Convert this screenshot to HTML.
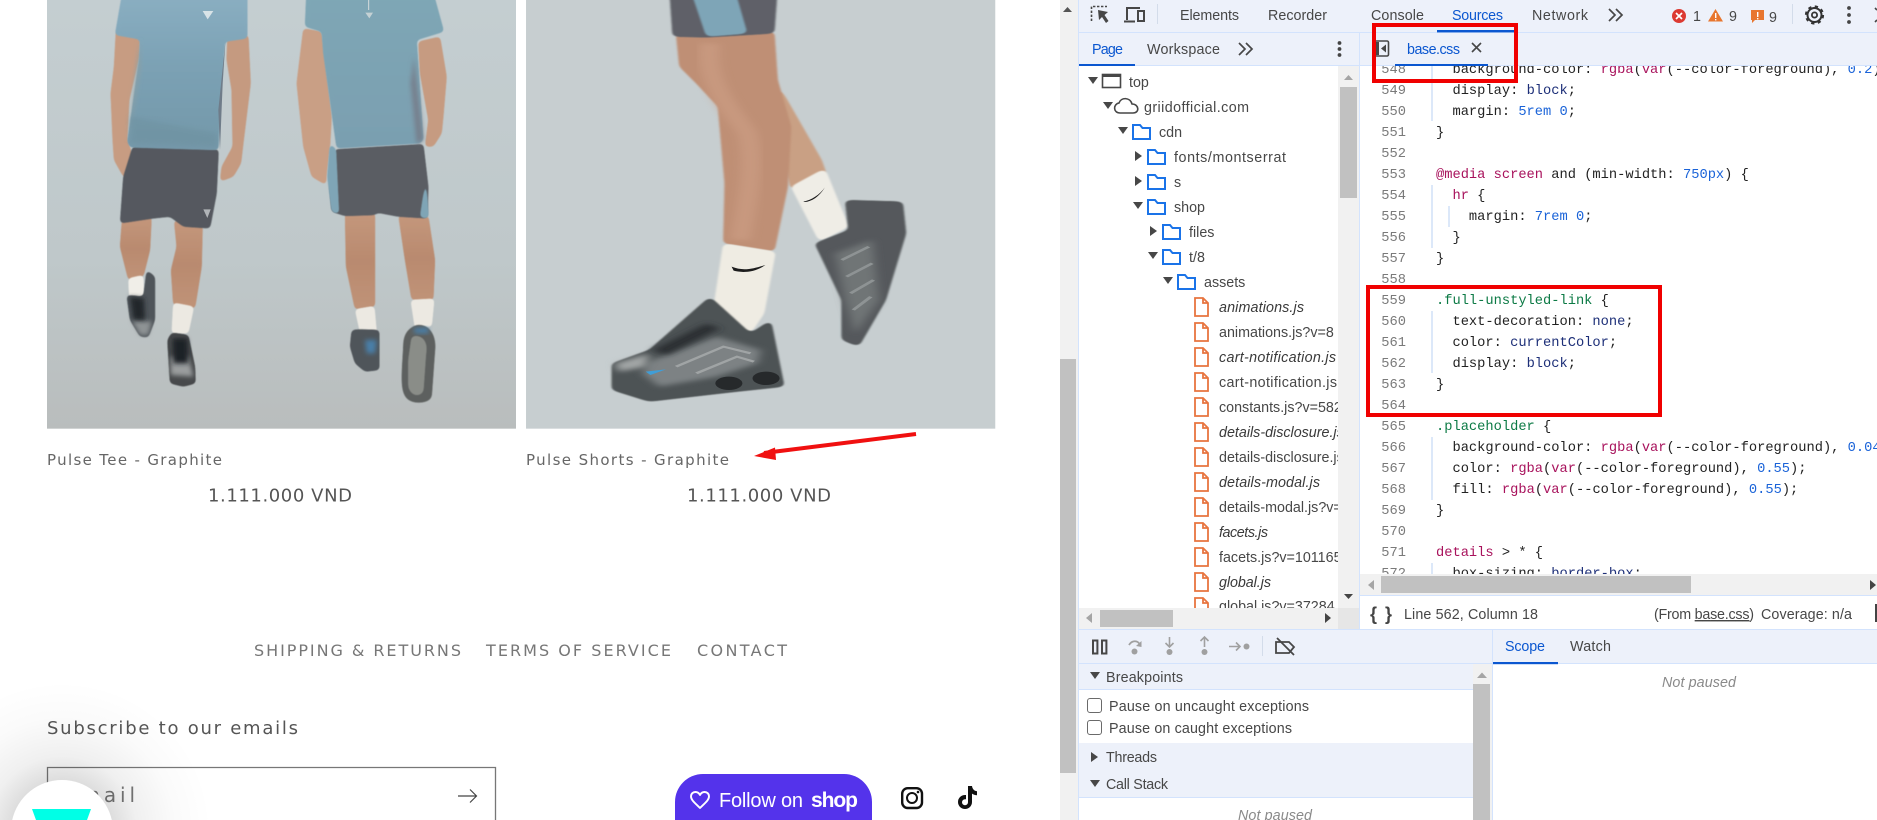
<!DOCTYPE html>
<html><head><meta charset="utf-8"><style>
html,body{margin:0;padding:0;background:#fff;width:1877px;height:820px;overflow:hidden}
svg{display:block}
text{white-space:pre}
.s{font-family:"Liberation Sans",sans-serif}
.d{font-family:"Liberation Sans",sans-serif;font-size:14.3px;fill:#474747}
.i{font-style:italic;fill:#3a3a3a}
.c{font-family:"Liberation Mono",monospace;font-size:13.72px;fill:#222}
.n{font-family:"Liberation Mono",monospace;font-size:13.72px;fill:#7a7a7a;text-anchor:end}
.r{fill:#a8125c}.v{fill:#1a63d8}.k{fill:#1d2f78}.g{fill:#0c7a45}
.m{font-family:"DejaVu Sans",sans-serif;fill:#666}
.ph path{filter:url(#sm)}
</style></head><body>
<svg xmlns="http://www.w3.org/2000/svg" width="1877" height="820" viewBox="0 0 1877 820">
<defs>
<linearGradient id="bg1" x1="0" y1="0" x2="0" y2="1"><stop offset="0" stop-color="#c4ced1"/><stop offset=".6" stop-color="#bfc8ca"/><stop offset="1" stop-color="#b9bdbd"/></linearGradient>
<linearGradient id="tee" x1="0" y1="0" x2="0" y2="1"><stop offset="0" stop-color="#8cb0c3"/><stop offset=".5" stop-color="#7ba1b4"/><stop offset="1" stop-color="#7498a9"/></linearGradient>
<linearGradient id="tee2" x1="0" y1="0" x2="0" y2="1"><stop offset="0" stop-color="#7fa7b6"/><stop offset="1" stop-color="#7a9fb0"/></linearGradient>
<linearGradient id="leg" x1="0" y1="0" x2="0" y2="1"><stop offset="0" stop-color="#c4977c"/><stop offset=".5" stop-color="#b98a6f"/><stop offset="1" stop-color="#c09378"/></linearGradient>
<radialGradient id="hz" gradientUnits="userSpaceOnUse" cx="62" cy="831" r="150"><stop offset=".3" stop-color="#000" stop-opacity=".15"/><stop offset=".5" stop-color="#000" stop-opacity=".06"/><stop offset=".75" stop-color="#000" stop-opacity=".018"/><stop offset="1" stop-color="#000" stop-opacity="0"/></radialGradient>
<filter id="sm" x="-20%" y="-20%" width="140%" height="140%"><feGaussianBlur in="SourceGraphic" stdDeviation="6"/><feColorMatrix type="matrix" values="1 0 0 0 0 0 1 0 0 0 0 0 1 0 0 0 0 0 14 -6"/><feGaussianBlur stdDeviation="1.5"/></filter>
<filter id="sf" x="-30%" y="-30%" width="160%" height="160%"><feGaussianBlur stdDeviation="7"/></filter>
<clipPath id="img1"><rect x="21" y="0" width="1407" height="1286"/></clipPath>
<clipPath id="img2"><rect x="778" y="0" width="694" height="1286"/></clipPath>
<clipPath id="tree"><rect x="1079" y="66" width="259" height="542"/></clipPath>
<clipPath id="code"><rect x="1360" y="66" width="517" height="508"/></clipPath>
<g id="fo"><path d="M1 -3V-7H8L10.5 -4H18V7H1Z" fill="none" stroke="#1a73e8" stroke-width="2"/></g>
<g id="fi"><path d="M1 -9H9L14 -4V9H1ZM9 -9V-4H14" fill="none" stroke="#e8743f" stroke-width="1.8"/></g>
<polygon id="dn" points="0,-4 10,-4 5,3" fill="#474747"/>
<polygon id="rt" points="0,-5 7,0 0,5" fill="#474747"/>
</defs>

<!-- left photo -->
<g transform="translate(40,0) scale(.33333)">
<rect x="21" y="0" width="1407" height="1286" fill="url(#bg1)"/>
<g clip-path="url(#img1)"><g class="ph">
<path d="M228 90L300 110L298 170L268 300L262 420L280 470L285 540L250 530L222 480L218 420L212 280L222 200Z" fill="#c79c82"/>
<path d="M562 110L625 105L632 250L610 430L603 490L580 530L540 545L545 500L578 440L575 270L560 180Z" fill="#c59a80"/>
<path d="M246 660L335 650L330 750L310 830L265 840L240 740Z" fill="url(#leg)"/>
<path d="M402 660L488 675L485 800L465 925L400 915L393 810L410 740Z" fill="url(#leg)"/>
<path d="M278 440L536 448L530 580L510 685L430 680L390 650L340 655L240 670L250 530Z" fill="#55585f"/>
<path d="M250 -40L225 105L300 118L297 180L262 425L270 442L535 450L540 330L555 125L622 115L622 -40Z" fill="url(#tee)"/>
<path d="M265 835L310 825L312 890L268 895Z" fill="#f0eee8"/>
<path d="M400 908L462 920L445 1000L395 1000Z" fill="#ece9e2"/>
<path d="M320 810L345 830L345 960L325 1012L300 1010L270 960L260 885L310 890Z" fill="#50555a"/>
<path d="M395 998L445 1005L465 1100L467 1150L430 1160L390 1150L382 1020Z" fill="#46494c"/>
<path d="M790 85L845 95L855 180L875 350L870 440L860 520L858 555L815 530L790 440L770 250Z" fill="#c99f85"/>
<path d="M1135 125L1200 110L1220 230L1210 350L1205 400L1180 440L1155 440L1165 360L1140 220Z" fill="#c69b81"/>
<path d="M915 640L1005 638L1005 780L1005 920L945 928L918 800Z" fill="url(#leg)"/>
<path d="M1075 645L1165 648L1185 780L1180 900L1115 900L1095 780Z" fill="url(#leg)"/>
<path d="M885 448L1150 432L1165 560L1162 655L1075 650L1012 638L1005 645L915 648L875 635L868 560Z" fill="#5a5d64"/>
<path d="M870 430L888 448L897 642L875 635L862 530Z" fill="#7fa5b6"/>
<path d="M1158 530L1166 655L1140 652Z" fill="#7fa5b6"/>
<path d="M800 -40L795 80L845 95L850 160L890 445L1140 430L1150 420L1130 120L1212 95L1175 -40Z" fill="url(#tee2)"/>
<path d="M945 928L1003 918L1012 1020L965 1020Z" fill="#ece9e2"/>
<path d="M1112 900L1183 896L1175 980L1125 985Z" fill="#ece9e2"/>
<path d="M935 990L960 988L1018 990L1018 1110L975 1115L945 1090L930 1040Z" fill="#50555a"/>
<path d="M1130 975C1170 970 1190 1010 1185 1050L1175 1190C1170 1210 1120 1215 1100 1195C1080 1170 1085 1130 1090 1040C1090 1000 1105 985 1130 975Z" fill="#5d605f"/>
<path d="M1115 1010C1150 1000 1165 1030 1158 1060L1150 1175C1135 1195 1110 1185 1105 1160L1105 1080Z" fill="#8a8d88"/>
</g>
<path d="M300 118L262 425L285 300L300 200Z" fill="#8c9fa3" filter="url(#sf)"/>
<path d="M556 125L535 330L540 450L548 250Z" fill="#6f7c89"/>
<path d="M1122 170L1150 420L1130 432L1112 250Z" fill="#767f8c" filter="url(#sf)"/>
<path d="M275 960L335 965L325 1005L300 1005Z" fill="#8e9394" filter="url(#sf)"/>
<path d="M270 890L312 895L315 960L280 960Z" fill="#22262c" filter="url(#sf)"/>
<path d="M392 1070L445 1070L460 1130L392 1125Z" fill="#9a9d9e" filter="url(#sf)"/>
<path d="M398 1015L442 1015L445 1090L400 1090Z" fill="#1f2226" filter="url(#sf)"/>
<path d="M1120 985L1165 982L1165 1000L1125 1000Z" fill="#4a7fa8" filter="url(#sf)"/>
<path d="M975 1020L1010 1020L1005 1060L980 1060Z" fill="#4a7fa8" filter="url(#sf)"/>
<path d="M270 350L530 400L530 440L275 430Z" fill="#6d909f" filter="url(#sf)" opacity=".5"/>
<path d="M388 500V650" stroke="#46484e" stroke-width="5" filter="url(#sf)"/>
<path d="M1010 480V640" stroke="#4b4d54" stroke-width="5" filter="url(#sf)"/>
</g>
<path d="M986 0V30" stroke="#d6dcdc" stroke-width="3"/>
<path d="M976 38H999L988 55Z" fill="#d6dcdc" opacity=".8"/>
<path d="M488 33H520L503 58Z" fill="#e6ecee" opacity=".85"/>
<path d="M490 628H512L502 654Z" fill="#c8ccce" opacity=".8"/>
</g>

<!-- right photo -->
<g transform="scale(.67613 .33333)">
<rect x="778" y="0" width="694" height="1286" fill="#c7ced0"/>
<g clip-path="url(#img2)"><g class="ph">
<path d="M1150 250L1215 480L1222 520L1170 570L1150 400Z" fill="#c9a084"/>
<path d="M1170 560L1220 505L1255 680L1212 725Z" fill="#efede6"/>
<path d="M1250 600L1335 605L1340 700L1310 900L1270 1040L1245 1020L1245 900L1205 730L1255 690Z" fill="#55595b"/>
<path d="M1000 100L1145 95L1150 240L1170 380L1165 560L1145 755L1070 730L1072 550L1062 320L1030 250L1005 200Z" fill="#bf8f74"/>
<path d="M1070 730L1147 755L1130 940L1110 1000L1055 930Z" fill="#efece3"/>
<path d="M1050 890L1110 1000L1140 960L1160 1160L1090 1175L960 1205L905 1170L905 1090L960 1050Z" fill="#4e5254"/>
<path d="M990 -40H1150L1145 100L1045 112L995 110Z" fill="#5f6168"/>
<path d="M1020 -40H1085L1105 100L1045 110Z" fill="#7ea5b7"/>
</g>
<path d="M1235 760L1290 720L1300 900L1265 1000L1250 900Z" fill="#6f7476" filter="url(#sf)"/>
<path d="M960 1085L1060 1010L1125 1050L1120 1090L1060 1130L975 1160L950 1120Z" fill="#7d8284" filter="url(#sf)"/>
<path d="M910 1090L960 1060L955 1100L915 1115Z" fill="#a2a6a6" filter="url(#sf)"/>
<path d="M965 1050L1045 970L1065 985L985 1065Z" fill="#2b2f33" filter="url(#sf)"/>
<path d="M1000 1100L1070 1040L1110 1060M1030 1120L1090 1070L1115 1085" fill="none" stroke="#a0a4a5" stroke-width="6"/>
<path d="M1245 780L1285 740M1252 830L1290 790M1258 880L1292 840M1262 930L1288 890" fill="none" stroke="#8e9394" stroke-width="6"/>
<path d="M1050 130C1040 250 1090 350 1105 400C1120 500 1100 650 1095 720" fill="none" stroke="#cd9f85" stroke-width="30" filter="url(#sf)" opacity=".6"/>
</g>
<circle cx="1078" cy="1150" r="20" fill="#26292b"/><circle cx="1133" cy="1135" r="20" fill="#26292b"/>
<path d="M1082 800C1100 815 1115 805 1132 795C1115 820 1095 818 1085 812Z" fill="#1c1c1c"/>
<path d="M1188 605C1200 600 1212 585 1220 562C1212 590 1200 605 1190 606Z" fill="#1c1c1c"/>
<path d="M955 1115L985 1108L962 1125Z" fill="#3f9ed8"/>
</g>

<!-- red arrow -->
<path d="M916 434L764 453" stroke="#f01010" stroke-width="4" fill="none"/>
<polygon points="754,456 775,447.5 776,460" fill="#f01010"/>

<!-- product text -->
<text class="m" x="47" y="465" font-size="15" textLength="175">Pulse Tee - Graphite</text>
<text class="m" x="526" y="465" font-size="15" textLength="203">Pulse Shorts - Graphite</text>
<text class="m" x="208" y="501.5" font-size="18" textLength="144" style="fill:#555">1.111.000 VND</text>
<text class="m" x="687" y="501.5" font-size="18" textLength="144" style="fill:#555">1.111.000 VND</text>
<text class="m" x="254" y="656" font-size="16" textLength="207" style="fill:#777">SHIPPING &amp; RETURNS</text>
<text class="m" x="486" y="656" font-size="16" textLength="185" style="fill:#777">TERMS OF SERVICE</text>
<text class="m" x="697" y="656" font-size="16" textLength="90" style="fill:#777">CONTACT</text>
<text class="m" x="47" y="734" font-size="18" textLength="251" style="fill:#555">Subscribe to our emails</text>

<path d="M47.5 820V767.5H495.5V820" fill="none" stroke="#777" stroke-width="1.3"/>
<text class="m" x="64" y="802" font-size="20" textLength="71" style="fill:#777">Email</text>
<path d="M458 796H476M470 789.5L476.5 796L470 802.5" fill="none" stroke="#444" stroke-width="1.2"/>

<!-- Follow on shop -->
<path d="M703 774H844A28 28 0 0 1 872 802V820H675V802A28 28 0 0 1 703 774Z" fill="#5433eb"/>
<path d="M700 808C695 803 691 800 691 796.5C691 793.5 693.2 792 695.4 792C697.4 792 699 793 700 795C701 793 702.6 792 704.6 792C706.8 792 709 793.5 709 796.5C709 800 705 803 700 808Z" fill="none" stroke="#fff" stroke-width="1.9" stroke-linejoin="round"/>
<text class="s" x="719" y="807" font-size="20" textLength="84" fill="#fff">Follow on</text>
<text class="s" x="811" y="807" font-size="21" font-weight="bold" textLength="47" fill="#fff">shop</text>

<rect x="902.2" y="788.2" width="19.8" height="19.8" rx="5.5" fill="none" stroke="#111" stroke-width="2.4"/>
<circle cx="912" cy="798" r="5" fill="none" stroke="#111" stroke-width="2"/>
<circle cx="918" cy="792" r="1.3" fill="#111"/>
<path d="M968 786h4c.4 3 2.2 5 5 5.2v4c-2 0-3.7-.6-5-1.6V802a7 7 0 1 1-7-7h1v4.2h-1a3 3 0 1 0 3 3Z" fill="#111"/>

<!-- circle widget -->
<rect x="0" y="681" width="212" height="139" fill="url(#hz)"/>
<path d="M12.2 820A51 51 0 0 1 111.8 820Z" fill="#fff"/>
<polygon points="32,809 91,809 87,820 36,820" fill="#00ffe6"/>

<!-- Devtools base -->
<rect x="1060" y="0" width="817" height="820" fill="#fff"/>
<rect x="1060" y="0" width="19" height="820" fill="#f1f1f1"/>
<rect x="1060" y="359" width="16" height="414" fill="#c1c1c1"/>
<polygon points="1063,12 1072,12 1067.5,7" fill="#555"/>
<rect x="1078" y="0" width="1" height="820" fill="#d3e3fd"/>

<!-- code pane -->
<g clip-path="url(#code)"><g transform="translate(0,-1)">
<path d="M1432 66V122M1432 186V249M1449 207V228M1432 312V374M1432 438V501M1432 564V575" stroke="#c5d8f5" stroke-width="1.2"/>
<g class="n">
<text class="n" x="1406" y="74">548</text><text class="n" x="1406" y="95">549</text><text class="n" x="1406" y="116">550</text><text class="n" x="1406" y="137">551</text><text class="n" x="1406" y="158">552</text><text class="n" x="1406" y="179">553</text><text class="n" x="1406" y="200">554</text><text class="n" x="1406" y="221">555</text><text class="n" x="1406" y="242">556</text><text class="n" x="1406" y="263">557</text><text class="n" x="1406" y="284">558</text><text class="n" x="1406" y="305">559</text><text class="n" x="1406" y="326">560</text><text class="n" x="1406" y="347">561</text><text class="n" x="1406" y="368">562</text><text class="n" x="1406" y="389">563</text><text class="n" x="1406" y="410">564</text><text class="n" x="1406" y="431">565</text><text class="n" x="1406" y="452">566</text><text class="n" x="1406" y="473">567</text><text class="n" x="1406" y="494">568</text><text class="n" x="1406" y="515">569</text><text class="n" x="1406" y="536">570</text><text class="n" x="1406" y="557">571</text><text class="n" x="1406" y="578">572</text>
</g>
<text class="c" x="1436" y="74">  background-color: <tspan class="r">rgba</tspan>(<tspan class="r">var</tspan>(--color-foreground), <tspan class="v">0.2</tspan>);</text>
<text class="c" x="1436" y="95">  display: <tspan class="k">block</tspan>;</text>
<text class="c" x="1436" y="116">  margin: <tspan class="v">5rem 0</tspan>;</text>
<text class="c" x="1436" y="137">}</text>
<text class="c" x="1436" y="179"><tspan class="r">@media screen</tspan> and (min-width: <tspan class="v">750px</tspan>) {</text>
<text class="c" x="1436" y="200">  <tspan class="r">hr</tspan> {</text>
<text class="c" x="1436" y="221">    margin: <tspan class="v">7rem 0</tspan>;</text>
<text class="c" x="1436" y="242">  }</text>
<text class="c" x="1436" y="263">}</text>
<text class="c" x="1436" y="305"><tspan class="g">.full-unstyled-link</tspan> {</text>
<text class="c" x="1436" y="326">  text-decoration: <tspan class="k">none</tspan>;</text>
<text class="c" x="1436" y="347">  color: <tspan class="k">currentColor</tspan>;</text>
<text class="c" x="1436" y="368">  display: <tspan class="k">block</tspan>;</text>
<text class="c" x="1436" y="389">}</text>
<text class="c" x="1436" y="431"><tspan class="g">.placeholder</tspan> {</text>
<text class="c" x="1436" y="452">  background-color: <tspan class="r">rgba</tspan>(<tspan class="r">var</tspan>(--color-foreground), <tspan class="v">0.04</tspan>);</text>
<text class="c" x="1436" y="473">  color: <tspan class="r">rgba</tspan>(<tspan class="r">var</tspan>(--color-foreground), <tspan class="v">0.55</tspan>);</text>
<text class="c" x="1436" y="494">  fill: <tspan class="r">rgba</tspan>(<tspan class="r">var</tspan>(--color-foreground), <tspan class="v">0.55</tspan>);</text>
<text class="c" x="1436" y="515">}</text>
<text class="c" x="1436" y="557"><tspan class="r">details</tspan> &gt; * {</text>
<text class="c" x="1436" y="578">  box-sizing: <tspan class="k">border-box</tspan>;</text>
</g></g>

<!-- code h-scroll -->
<rect x="1360" y="574" width="517" height="21" fill="#f1f1f1"/>
<rect x="1381" y="576" width="310" height="17" fill="#c1c1c1"/>
<polygon points="1374,580 1374,590 1368,585" fill="#a5a5a5"/>
<polygon points="1870,580 1870,590 1876,585" fill="#444"/>
<rect x="1360" y="595" width="517" height="1" fill="#d3e3fd"/>

<!-- status bar -->
<text class="s" x="1370" y="620" font-size="18" font-weight="bold" fill="#444" textLength="22">{ }</text>
<text class="d" x="1404" y="619" textLength="134">Line 562, Column 18</text>
<text class="d" x="1654" y="619" textLength="100">(From <tspan text-decoration="underline">base.css</tspan>)</text>
<text class="d" x="1761" y="619" textLength="91">Coverage: n/a</text>
<rect x="1875" y="604" width="2" height="18" fill="#444"/>

<!-- Tree pane -->
<g clip-path="url(#tree)">
<use href="#dn" x="1088" y="81"/><rect x="1102.5" y="74.5" width="18" height="13" fill="none" stroke="#474747" stroke-width="1.6"/><rect x="1102" y="74" width="19" height="3" fill="#474747"/>
<text class="d" x="1129" y="87">top</text>
<use href="#dn" x="1103" y="106"/><path d="M1120 113H1133C1140 113 1139 104 1132 104C1130 97 1121 97 1119 103C1113 104 1113 113 1120 113Z" fill="none" stroke="#474747" stroke-width="1.6"/>
<text class="d" x="1144" y="112" textLength="105">griidofficial.com</text>
<use href="#dn" x="1118" y="131"/><use href="#fo" x="1132" y="132"/><text class="d" x="1159" y="137">cdn</text>
<use href="#rt" x="1135" y="156"/><use href="#fo" x="1147" y="157"/><text class="d" x="1174" y="162" textLength="112">fonts/montserrat</text>
<use href="#rt" x="1135" y="181"/><use href="#fo" x="1147" y="182"/><text class="d" x="1174" y="187">s</text>
<use href="#dn" x="1133" y="206"/><use href="#fo" x="1147" y="207"/><text class="d" x="1174" y="212">shop</text>
<use href="#rt" x="1150" y="231"/><use href="#fo" x="1162" y="232"/><text class="d" x="1189" y="237">files</text>
<use href="#dn" x="1148" y="256"/><use href="#fo" x="1162" y="257"/><text class="d" x="1189" y="262">t/8</text>
<use href="#dn" x="1163" y="281"/><use href="#fo" x="1177" y="282"/><text class="d" x="1204" y="287">assets</text>
<use href="#fi" x="1194" y="307"/><text class="d i" x="1219" y="312" textLength="85">animations.js</text>
<use href="#fi" x="1194" y="332"/><text class="d" x="1219" y="337">animations.js?v=8</text>
<use href="#fi" x="1194" y="357"/><text class="d i" x="1219" y="362" textLength="117">cart-notification.js</text>
<use href="#fi" x="1194" y="382"/><text class="d" x="1219" y="387" textLength="118">cart-notification.js</text>
<use href="#fi" x="1194" y="407"/><text class="d" x="1219" y="412">constants.js?v=582</text>
<use href="#fi" x="1194" y="432"/><text class="d i" x="1219" y="437">details-disclosure.js</text>
<use href="#fi" x="1194" y="457"/><text class="d" x="1219" y="462">details-disclosure.js</text>
<use href="#fi" x="1194" y="482"/><text class="d i" x="1219" y="487" textLength="101">details-modal.js</text>
<use href="#fi" x="1194" y="507"/><text class="d" x="1219" y="512">details-modal.js?v=</text>
<use href="#fi" x="1194" y="532"/><text class="d i" x="1219" y="537" textLength="49">facets.js</text>
<use href="#fi" x="1194" y="557"/><text class="d" x="1219" y="562">facets.js?v=101165</text>
<use href="#fi" x="1194" y="582"/><text class="d i" x="1219" y="587" textLength="52">global.js</text>
<use href="#fi" x="1194" y="607"/><text class="d" x="1219" y="611">global.js?v=37284</text>
</g>
<rect x="1338" y="66" width="21" height="542" fill="#f1f1f1"/>
<rect x="1340" y="87" width="17" height="111" fill="#c1c1c1"/>
<polygon points="1344,80 1353,80 1348.5,75" fill="#a5a5a5"/>
<polygon points="1344,594 1353,594 1348.5,599" fill="#444"/>
<rect x="1079" y="608" width="259" height="21" fill="#f1f1f1"/>
<rect x="1100" y="610" width="73" height="17" fill="#c1c1c1"/>
<polygon points="1092,613 1092,623 1086,618" fill="#a5a5a5"/>
<polygon points="1325,613 1325,623 1331,618" fill="#444"/>
<rect x="1338" y="608" width="21" height="21" fill="#e6e6e6"/>
<rect x="1359" y="33" width="1" height="596" fill="#d3e3fd"/>

<!-- top bars -->
<rect x="1079" y="0" width="798" height="32" fill="#edf1fa"/>
<rect x="1079" y="32" width="798" height="1" fill="#d3e3fd"/>
<rect x="1079" y="33" width="798" height="32" fill="#edf1fa"/>
<rect x="1079" y="65" width="798" height="1" fill="#d3e3fd"/>
<rect x="1359" y="33" width="1" height="33" fill="#d3e3fd"/>

<path d="M1091.5 21V6.5H1107" fill="none" stroke="#474747" stroke-width="1.6" stroke-dasharray="2.4 1.6"/>
<path d="M1098 10L1108 12L1104.5 15L1108.5 21L1106 23L1102 17L1099 20Z" fill="#474747"/>
<path d="M1127 20V8H1140M1124 21.5H1135" fill="none" stroke="#474747" stroke-width="2"/>
<rect x="1138" y="11" width="6" height="10" fill="none" stroke="#474747" stroke-width="2"/>
<rect x="1157" y="4" width="1" height="20" fill="#d3dcea"/>
<text class="d" x="1180" y="20" textLength="59">Elements</text>
<text class="d" x="1268" y="20" textLength="59">Recorder</text>
<text class="d" x="1371" y="20" textLength="53">Console</text>
<text class="d" x="1452" y="20" textLength="51" style="fill:#0b57d0">Sources</text>
<rect x="1437" y="30" width="78" height="2.4" fill="#0b57d0"/>
<text class="d" x="1532" y="20" textLength="56">Network</text>
<path d="M1609 9L1615 15L1609 21M1616 9L1622 15L1616 21" fill="none" stroke="#474747" stroke-width="1.7"/>
<circle cx="1679" cy="16" r="7" fill="#dc3a32"/>
<path d="M1676 13L1682 19M1682 13L1676 19" stroke="#fff" stroke-width="1.7"/>
<text class="d" x="1693" y="21">1</text>
<polygon points="1708,21.5 1723,21.5 1715.5,9" fill="#e8762f"/>
<rect x="1715" y="13" width="1.4" height="5" fill="#fff"/><rect x="1715" y="19" width="1.4" height="1.4" fill="#fff"/>
<text class="d" x="1729" y="21">9</text>
<path d="M1751 10H1764V20H1755L1752 23V20H1751Z" fill="#e8762f"/>
<rect x="1757" y="12" width="1.4" height="5" fill="#fff"/><rect x="1757" y="18" width="1.4" height="1.4" fill="#fff"/>
<text class="d" x="1769" y="22">9</text>
<rect x="1792" y="4" width="1" height="20" fill="#d3dcea"/>
<circle cx="1814.5" cy="15" r="7" fill="none" stroke="#333" stroke-width="2"/>
<circle cx="1814.5" cy="15" r="8.4" fill="none" stroke="#333" stroke-width="2.4" stroke-dasharray="3.2 3.4"/>
<circle cx="1814.5" cy="15" r="2.6" fill="none" stroke="#333" stroke-width="1.8"/>
<circle cx="1849" cy="8" r="1.9" fill="#444"/><circle cx="1849" cy="15" r="1.9" fill="#444"/><circle cx="1849" cy="22" r="1.9" fill="#444"/>
<path d="M1875 8L1877 10M1877 20L1875 22" stroke="#444" stroke-width="1.6"/>

<text class="d" x="1092" y="54" textLength="31" style="fill:#0b57d0">Page</text>
<rect x="1079" y="64" width="56" height="2" fill="#0b57d0"/>
<text class="d" x="1147" y="54" textLength="73">Workspace</text>
<path d="M1239 43L1245 49L1239 55M1246 43L1252 49L1246 55" fill="none" stroke="#474747" stroke-width="1.7"/>
<circle cx="1339.5" cy="43" r="1.9" fill="#444"/><circle cx="1339.5" cy="49" r="1.9" fill="#444"/><circle cx="1339.5" cy="55" r="1.9" fill="#444"/>
<rect x="1375" y="41" width="13.5" height="15" rx="1.5" fill="none" stroke="#474747" stroke-width="1.6"/>
<rect x="1376" y="42" width="3" height="13" fill="#474747"/>
<polygon points="1386,44.5 1386,52.5 1381,48.5" fill="#474747"/>
<text class="d" x="1407" y="54" textLength="53" style="fill:#0b57d0">base.css</text>
<path d="M1472 43L1481 52M1481 43L1472 52" stroke="#474747" stroke-width="1.6"/>
<rect x="1395" y="64" width="93" height="2" fill="#0b57d0"/>

<!-- debugger -->
<rect x="1079" y="629" width="798" height="1" fill="#d3e3fd"/>
<rect x="1079" y="630" width="798" height="33" fill="#edf1fa"/>
<rect x="1079" y="663" width="798" height="1" fill="#d3e3fd"/>
<rect x="1492" y="630" width="1" height="190" fill="#d3e3fd"/>

<rect x="1093" y="640.5" width="4.4" height="13" fill="none" stroke="#474747" stroke-width="2"/>
<rect x="1102" y="640.5" width="4.4" height="13" fill="none" stroke="#474747" stroke-width="2"/>
<path d="M1129 645C1132 640 1138 640 1140 645" fill="none" stroke="#a0a0a0" stroke-width="1.8"/><path d="M1136 646L1141.5 647L1141.5 641Z" fill="#a0a0a0"/><circle cx="1134.5" cy="651.5" r="3" fill="#a0a0a0"/>
<path d="M1169.5 637V646M1165.5 643L1169.5 647L1173.5 643" fill="none" stroke="#a0a0a0" stroke-width="1.6"/><circle cx="1169.5" cy="652" r="3" fill="#a0a0a0"/>
<path d="M1204.5 647V638M1200.5 641L1204.5 637L1208.5 641" fill="none" stroke="#a0a0a0" stroke-width="1.6"/><circle cx="1204.5" cy="652" r="3" fill="#a0a0a0"/>
<path d="M1229 646.5H1240M1236 642.5L1240 646.5L1236 650.5" fill="none" stroke="#a0a0a0" stroke-width="1.6"/><circle cx="1246.5" cy="646.5" r="3" fill="#a0a0a0"/>
<rect x="1262" y="636" width="1" height="20" fill="#d3dcea"/>
<path d="M1276 642H1289L1294 647L1289 653H1276Z" fill="none" stroke="#474747" stroke-width="1.8"/>
<path d="M1277 638L1294 655" stroke="#474747" stroke-width="1.8"/>

<rect x="1079" y="664" width="394" height="25" fill="#edf1fa"/>
<rect x="1079" y="689" width="394" height="1" fill="#d3e3fd"/>
<use href="#dn" x="1090" y="676"/>
<text class="d" x="1106" y="682" textLength="77">Breakpoints</text>
<rect x="1087.5" y="698.5" width="14" height="14" rx="2.5" fill="#fff" stroke="#6a6a6a" stroke-width="1"/>
<text class="d" x="1109" y="711" textLength="200">Pause on uncaught exceptions</text>
<rect x="1087.5" y="720.5" width="14" height="14" rx="2.5" fill="#fff" stroke="#6a6a6a" stroke-width="1"/>
<text class="d" x="1109" y="733" textLength="183">Pause on caught exceptions</text>
<rect x="1079" y="743" width="394" height="54" fill="#edf1fa"/>
<rect x="1079" y="797" width="394" height="1" fill="#d3e3fd"/>
<use href="#rt" x="1091" y="757"/>
<text class="d" x="1106" y="762" textLength="51">Threads</text>
<use href="#dn" x="1090" y="784"/>
<text class="d" x="1106" y="789" textLength="62">Call Stack</text>
<text class="d" x="1238" y="820" textLength="74" style="font-style:italic;fill:#8a8a8a">Not paused</text>
<rect x="1473" y="664" width="19" height="156" fill="#f1f1f1"/>
<rect x="1473" y="684" width="17" height="136" fill="#c1c1c1"/>
<polygon points="1477,678 1487,678 1482,672.5" fill="#a5a5a5"/>

<text class="d" x="1505" y="651" textLength="40" style="fill:#0b57d0">Scope</text>
<text class="d" x="1570" y="651" textLength="41">Watch</text>
<rect x="1493" y="662" width="65" height="2.2" fill="#0b57d0"/>
<text class="d" x="1662" y="687" textLength="74" style="font-style:italic;fill:#8a8a8a">Not paused</text>

<!-- red boxes -->
<rect x="1374" y="25" width="142" height="56" fill="none" stroke="#f00000" stroke-width="4"/>
<rect x="1368" y="287" width="292" height="128" fill="none" stroke="#f00000" stroke-width="4"/>
</svg>
</body></html>
